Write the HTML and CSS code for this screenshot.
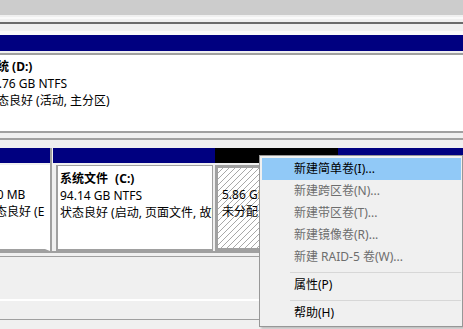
FILE: index.html
```html
<!DOCTYPE html>
<html lang="zh-CN">
<head>
  <meta charset="UTF-8" />
  <title>磁盘管理</title>
  <link rel="stylesheet" href="styles.css">
</head>
<body>
  <div class="screen">
    <div class="top-strip"></div>
    <div class="splitter"></div>

    <!-- disk 0 -->
    <div class="disk disk-one">
      <div class="vol vol-d">
        <div class="vol-bar navy"></div>
        <div class="vol-body">
          <div class="vol-name">系统 (D:)</div>
          <div>45.76 GB NTFS</div>
          <div>状态良好 (活动, 主分区)</div>
        </div>
      </div>
    </div>

    <!-- disk 1 -->
    <div class="disk disk-two">
      <div class="vol vol-efi">
        <div class="vol-bar navy"></div>
        <div class="vol-body">
          <div class="vol-name">&nbsp;</div>
          <div>100 MB</div>
          <div>状态良好 (EFI 系统分区)</div>
        </div>
      </div>
      <div class="vol vol-c">
        <div class="vol-bar navy"></div>
        <div class="vol-body">
          <div class="vol-name">系统文件 (C:)</div>
          <div>94.14 GB NTFS</div>
          <div>状态良好 (启动, 页面文件, 故障转储, 主分区)</div>
        </div>
      </div>
      <div class="vol vol-free">
        <div class="vol-bar black"></div>
        <div class="vol-body hatched">
          <div class="vol-name">&nbsp;</div>
          <div>5.86 GB</div>
          <div>未分配</div>
        </div>
      </div>
      <div class="vol vol-rest">
        <div class="vol-bar navy"></div>
        <div class="vol-body"></div>
      </div>
    </div>

    <div class="lower"></div>

    <!-- context menu -->
    <div class="menu">
      <div class="menu-item hot">新建简单卷(I)...</div>
      <div class="menu-item off">新建跨区卷(N)...</div>
      <div class="menu-item off">新建带区卷(T)...</div>
      <div class="menu-item off">新建镜像卷(R)...</div>
      <div class="menu-item off">新建 RAID-5 卷(W)...</div>
      <div class="menu-sep"></div>
      <div class="menu-item">属性(P)</div>
      <div class="menu-sep"></div>
      <div class="menu-item">帮助(H)</div>
    </div>
  </div>
</body>
</html>
```

FILE: styles.css
```css
* {
  margin: 0;
  padding: 0;
  box-sizing: border-box;
}

body {
  background: #f0f0f0;
  font-family: "Noto Sans", "Noto Sans CJK SC", sans-serif;
  font-size: 12px;
  color: #000;
}

.screen {
  position: relative;
  width: 463px;
  height: 329px;
  overflow: hidden;
  background: #f0f0f0;
}

.top-strip {
  height: 15px;
  background: #cccccc;
}

.splitter {
  height: 20px;
  background: linear-gradient(to bottom,
    #f0f0f0 0 2px, #fafafa 2px 4px, #f0f0f0 4px 7px,
    #6b6b6b 7px 9px, #f0f0f0 9px 16px, #fafafa 16px 20px);
}

.disk {
  display: flex;
  white-space: nowrap;
}

.vol {
  display: flex;
  flex-direction: column;
  flex-shrink: 0;
  overflow: hidden;
}

.vol-bar {
  height: 16px;
}

.navy { background: #000080; }
.black { background: #000; }

.vol-body {
  flex: 1;
  background: #fff;
  line-height: 17px;
  overflow: hidden;
}

.vol-name {
  font-weight: bold;
}

/* disk 0 */
.disk-one {
  height: 98px;
  border-bottom: 2px solid #a0a0a0;
}

.vol-d {
  margin-left: -15px;
  width: 478px;
}

.vol-d .vol-bar {
  border-bottom: 2px solid #f0f0f0;
  height: 18px;
}

.vol-d .vol-body {
  border-top: 2px solid #a0a0a0;
  padding: 3px 0 0 0;
}

/* disk 1 */
.disk-two {
  margin-top: 5px;
  padding-top: 8px;
  border-top: 2px solid #a0a0a0;
  height: 115px;
  border-bottom: 2px solid #a0a0a0;
}

.disk-two .vol-bar {
  height: 15px;
}

.vol-efi {
  width: 100px;
  margin-left: -48px;
  border-right: 2px solid #a0a0a0;
}

.vol-efi .vol-body {
  margin-top: 2px;
  padding: 4px 0 0 31px;
  border-right: 5px solid #fff;
  border-bottom: 2px solid #a0a0a0;
}

.vol-c {
  width: 162px;
  margin-left: 1px;
}

.vol-c .vol-name {
  word-spacing: 4px;
}

.vol-c .vol-body,
.vol-free .vol-body,
.vol-rest .vol-body {
  margin: 2px 2px 0 3px;
  border: 1px solid #a0a0a0;
  border-width: 1px 1px 2px 2px;
  padding: 4px 0 0 2px;
}

.vol-free {
  width: 123px;
}

.vol-free .vol-body {
  margin: 2px 0 0 0;
  border: 3px solid #a0a0a0;
  padding: 1px 0 0 4px;
}

.hatched {
  background: repeating-linear-gradient(135deg,
    #fff 0 3.4px, #a8a8a8 3.4px 4.24px);
}

.vol-rest {
  width: 140px;
}

.lower {
  height: 68px;
  background: linear-gradient(to bottom,
    #f0f0f0 0 3px, #a0a0a0 3px 4px, #f0f0f0 4px 46px,
    #fff 46px 48px, #f0f0f0 48px 66px, #a0a0a0 66px 67px, #f0f0f0 67px);
}

/* context menu */
.menu {
  position: absolute;
  left: 259px;
  top: 155px;
  width: 204px;
  height: 172px;
  background: #f0f0f0;
  border: 1px solid #979797;
  padding: 2px 1px 2px 2px;
  box-shadow: 2px 2px 2px rgba(0, 0, 0, 0.2);
}

.menu-item {
  height: 22px;
  line-height: 22px;
  padding-left: 32px;
}

.menu-item.hot {
  background: #91c9f7;
}

.menu-item.off {
  color: #6d6d6d;
}

.menu-sep {
  height: 1px;
  margin: 4px 0 1px 28px;
  background: #d7d7d7;
}
```
